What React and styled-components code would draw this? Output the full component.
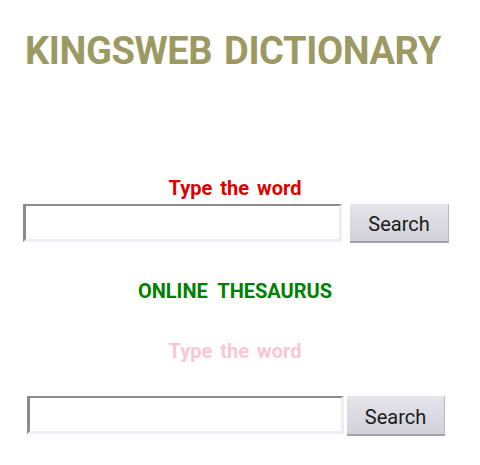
import React from "react";
import styled, { createGlobalStyle } from "styled-components";

const Global = createGlobalStyle`
  html, body { margin: 0; padding: 0; background: #fff; }
  body { font-family: Roboto, "Noto Sans", sans-serif; }
`;

const Page = styled.div`
  width: 480px;
  height: 465px;
  display: flex;
  flex-direction: column;
  overflow: hidden;
`;

const Title = styled.h1`
  margin: 0;
  padding: 29px 0 0 25px;
  font-family: Roboto, sans-serif;
  font-weight: 700;
  font-size: 38px;
  line-height: 44px;
  color: #9c9a62;
  letter-spacing: -0.4px;
  word-spacing: 3px;
`;

const Label = styled.div`
  width: 470px;
  text-align: center;
  font-family: Roboto, sans-serif;
  font-weight: 700;
  font-size: ${(p) => p.$size}px;
  line-height: 22px;
  word-spacing: ${(p) => p.$ws}px;
  color: ${(p) => p.$color};
  margin-top: ${(p) => p.$top}px;
`;

const Form = styled.form`
  display: flex;
  align-items: flex-start;
  gap: ${(p) => p.$gap}px;
  margin-top: ${(p) => p.$top}px;
  padding-left: ${(p) => p.$left}px;
`;

const Input = styled.input`
  box-sizing: border-box;
  width: ${(p) => p.$w}px;
  height: 38px;
  margin: 0;
  padding: 0 4px;
  background: #fff;
  border-style: solid;
  border-width: 2px 3px 3px 3px;
  border-color: #8a8d8a #eceef2 #eceef2 #8a8d8a;
  outline: none;
`;

const Button = styled.button`
  box-sizing: border-box;
  width: ${(p) => p.$w}px;
  height: ${(p) => p.$h}px;
  margin: 0;
  padding: 2px 0 0;
  border: none;
  border-top: 1px solid #e6e4ec;
  border-bottom: 2px solid #a2a2aa;
  border-right: 1px solid #b8b8c0;
  background: linear-gradient(#e4e3ea, #d2d1da);
  font-family: Roboto, sans-serif;
  font-size: 20px;
  color: #1a1a1a;
`;

export default function App() {
  return (
    <Page>
      <Global />
      <Title>KINGSWEB DICTIONARY</Title>
      <Label $color="#e00000" $size={20} $ws={3} $top={104}>Type the word</Label>
      <Form $gap={8} $top={5} $left={23} onSubmit={(e) => e.preventDefault()}>
        <Input $w={319} />
        <Button $w={99} $h={39}>Search</Button>
      </Form>
      <Label $color="#008000" $size={20} $ws={5} $top={37}>ONLINE THESAURUS</Label>
      <Label $color="#f9c8d2" $size={20} $ws={3} $top={38}>Type the word</Label>
      <Form $gap={3} $top={34} $left={27} onSubmit={(e) => e.preventDefault()}>
        <Input $w={317} />
        <Button $w={98} $h={40}>Search</Button>
      </Form>
    </Page>
  );
}
